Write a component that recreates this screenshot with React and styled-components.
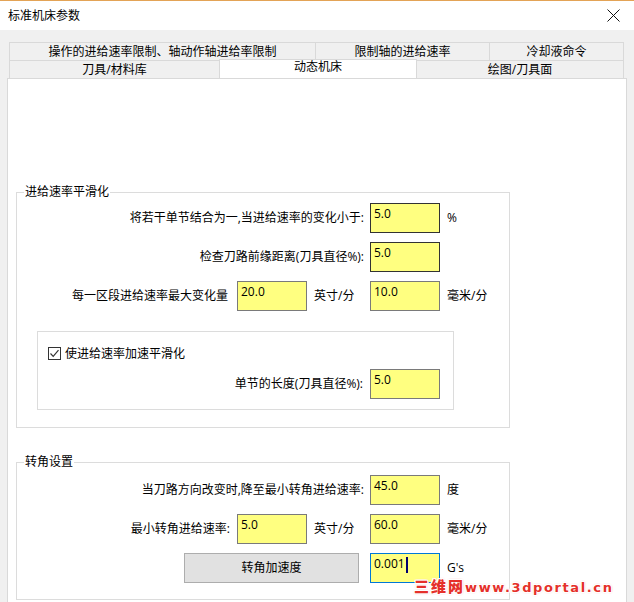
import styled, { createGlobalStyle } from "styled-components";

const GlobalStyle = createGlobalStyle`
  html, body {
    margin: 0;
    padding: 0;
    background: #f0f0f0;
  }
  body {
    font-family: "Open Sans", "Noto Sans CJK SC", sans-serif;
    font-size: 12px;
    color: #000;
  }
`;

const Window = styled.div`
  position: relative;
  width: 634px;
  height: 602px;
  overflow: hidden;
  background: #f0f0f0;
`;

const TitleBar = styled.div`
  box-sizing: border-box;
  height: 30px;
  border-top: 1px solid #e3a356;
  background: #fff;
  display: flex;
  align-items: center;
  justify-content: space-between;
  padding: 0 14px 0 8px;
  line-height: 16px;
`;

const CloseIcon = () => (
  <svg width="13" height="13" viewBox="0 0 13 13">
    <path d="M0.5 0.5 L12.5 12.5 M12.5 0.5 L0.5 12.5" stroke="#111" strokeWidth="1" fill="none" />
  </svg>
);

const TabStrip = styled.div`
  margin: 12px 0 0 9px;
  width: 615px;
`;

const TabRow = styled.div`
  display: flex;
  height: 18px;
`;

const Tab = styled.div`
  box-sizing: border-box;
  width: ${(p) => p.$w}px;
  flex: none;
  border-top: 1px solid #d9d9d9;
  border-left: 1px solid #d9d9d9;
  background: #f0f0f0;
  display: flex;
  align-items: center;
  justify-content: center;
  line-height: 16px;
  white-space: nowrap;
  &:last-child {
    border-right: 1px solid #d9d9d9;
  }
`;

const ActiveTab = styled(Tab)`
  position: relative;
  z-index: 1;
  height: 19px;
  margin-top: -1px;
  padding-bottom: 4px;
  background: #fff;
  border-right: 1px solid #d9d9d9;
  & + ${Tab} {
    border-left: none;
  }
`;

const Panel = styled.div`
  box-sizing: border-box;
  margin-left: 7px;
  width: 620px;
  height: 560px;
  border: 1px solid #d9d9d9;
  background: #fff;
  padding: 113px 0 0 8px;
`;

const Group = styled.div`
  position: relative;
  box-sizing: border-box;
  width: 494px;
  border: 1px solid #dcdcdc;
  margin-top: ${(p) => p.$mt || 0}px;
  padding: ${(p) => p.$pt}px 0 ${(p) => p.$pb}px 0;
`;

const GroupTitle = styled.span`
  position: absolute;
  top: -9px;
  left: 7px;
  padding: 0 1px;
  background: #fff;
  line-height: 16px;
`;

const FormGrid = styled.div`
  display: grid;
  grid-template-columns: 220px 70px 63px 70px 1fr;
  row-gap: 9px;
  align-items: center;
  line-height: 16px;
`;

const Label = styled.span`
  grid-column: ${(p) => p.$span || "1 / 2"};
  text-align: right;
  padding-right: ${(p) => p.$pr || 0}px;
  white-space: nowrap;
`;

const Unit = styled.span`
  padding-left: 7px;
  white-space: nowrap;
`;

const Field = styled.div`
  grid-column: ${(p) => p.$col || "auto"};
  box-sizing: border-box;
  width: 70px;
  height: 30px;
  border: 1px solid
    ${(p) => (p.$tone === "dark" ? "#333" : p.$tone === "focus" ? "#0078d7" : "#7a7a7a")};
  background: #ffff80;
  padding: 2px 3px;
  line-height: 16px;
  display: flex;
  align-items: flex-start;
`;

const Caret = styled.span`
  display: inline-block;
  width: 2px;
  height: 16px;
  margin-top: 1px;
  margin-left: 1px;
  background: #000070;
`;

const Button = styled.div`
  grid-column: 1 / 4;
  justify-self: end;
  margin-right: 11px;
  box-sizing: border-box;
  width: 175px;
  height: 30px;
  background: #e1e1e1;
  border: 1px solid #adadad;
  display: flex;
  align-items: center;
  justify-content: center;
`;

const SubBox = styled.div`
  box-sizing: border-box;
  width: 417px;
  margin: 20px 0 0 20px;
  border: 1px solid #dcdcdc;
  padding: 15px 13px 10px 10px;
  line-height: 16px;
`;

const CheckRow = styled.div`
  display: flex;
  align-items: center;
  height: 13px;
  gap: 4px;
`;

const CheckBox = styled.span`
  box-sizing: border-box;
  width: 13px;
  height: 13px;
  border: 1px solid #333;
  background: #fff;
  display: flex;
  align-items: center;
  justify-content: center;
`;

const FieldRow = styled.div`
  display: flex;
  align-items: center;
  justify-content: flex-end;
  margin-top: 9px;
  gap: 7px;
`;

const Watermark = styled.div`
  position: absolute;
  left: 414px;
  top: 579px;
  font-family: "DejaVu Sans", "Noto Sans CJK SC", sans-serif;
  font-weight: 900;
  font-size: 13px;
  letter-spacing: 1.6px;
  line-height: 16px;
  color: #e5302a;
  white-space: nowrap;
  text-shadow: 1px 0 #fff, -1px 0 #fff, 0 1px #fff, 0 -1px #fff, 1px 1px #fff, -1px -1px #fff,
    1px -1px #fff, -1px 1px #fff, 0 0 2px #e5302a;
  & b {
    font-size: 15px;
    letter-spacing: 2px;
  }
`;

const App = () => {
  return (
    <Window>
      <GlobalStyle />
      <TitleBar>
        <span>标准机床参数</span>
        <CloseIcon />
      </TitleBar>

      <TabStrip>
        <TabRow>
          <Tab $w={306}>操作的进给速率限制、轴动作轴进给率限制</Tab>
          <Tab $w={174}>限制轴的进给速率</Tab>
          <Tab $w={135}>冷却液命令</Tab>
        </TabRow>
        <TabRow>
          <Tab $w={210}>刀具/材料库</Tab>
          <ActiveTab $w={198}>动态机床</ActiveTab>
          <Tab $w={207}>绘图/刀具面</Tab>
        </TabRow>
      </TabStrip>

      <Panel>
        <Group $pt={10} $pb={17}>
          <GroupTitle>进给速率平滑化</GroupTitle>
          <FormGrid>
            <Label $span="1 / 4" $pr={6}>将若干单节结合为一,当进给速率的变化小于:</Label>
            <Field $col="4" $tone="dark">5.0</Field>
            <Unit>%</Unit>

            <Label $span="1 / 4" $pr={6}>检查刀路前缘距离(刀具直径%):</Label>
            <Field $col="4" $tone="dark">5.0</Field>

            <Label $pr={9}>每一区段进给速率最大变化量</Label>
            <Field>20.0</Field>
            <Unit>英寸/分</Unit>
            <Field>10.0</Field>
            <Unit>毫米/分</Unit>
          </FormGrid>

          <SubBox>
            <CheckRow>
              <CheckBox>
                <svg width="11" height="11" viewBox="0 0 11 11">
                  <path d="M1.5 5.5 L4.2 8.3 L9.5 2.2" stroke="#333" strokeWidth="1.2" fill="none" />
                </svg>
              </CheckBox>
              <span>使进给速率加速平滑化</span>
            </CheckRow>
            <FieldRow>
              <span>单节的长度(刀具直径%):</span>
              <Field>5.0</Field>
            </FieldRow>
          </SubBox>
        </Group>

        <Group $mt={34} $pt={12} $pb={16}>
          <GroupTitle>转角设置</GroupTitle>
          <FormGrid>
            <Label $span="1 / 4" $pr={6}>当刀路方向改变时,降至最小转角进给速率:</Label>
            <Field $col="4">45.0</Field>
            <Unit>度</Unit>

            <Label $pr={7}>最小转角进给速率:</Label>
            <Field>5.0</Field>
            <Unit>英寸/分</Unit>
            <Field>60.0</Field>
            <Unit>毫米/分</Unit>

            <Button>转角加速度</Button>
            <Field $col="4" $tone="focus">
              0.001
              <Caret />
            </Field>
            <Unit>G's</Unit>
          </FormGrid>
        </Group>
      </Panel>

      <Watermark>
        <b>三维网</b>www.3dportal.cn
      </Watermark>
    </Window>
  );
};

export default App;
